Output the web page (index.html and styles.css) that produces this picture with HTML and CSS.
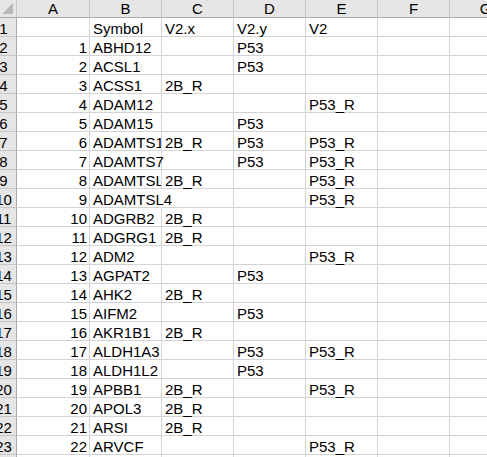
FILE: index.html
```html
<!DOCTYPE html>
<html lang="en">
<head>
    <meta charset="UTF-8">
    <title>Sheet1</title>
    <link rel="stylesheet" href="styles.css">
</head>
<body>

    <!-- Worksheet grid -->
    <table class="sheet">
        <colgroup>
            <col class="col-head">
            <col class="col-a">
            <col class="col"><col class="col"><col class="col"><col class="col"><col class="col"><col class="col">
        </colgroup>
        <thead>
            <tr>
                <th class="corner"><span class="tri"></span></th>
                <th>A</th><th>B</th><th>C</th><th>D</th><th>E</th><th>F</th><th>G</th>
            </tr>
        </thead>
        <tbody>
            <tr><th>1</th><td></td><td>Symbol</td><td>V2.x</td><td>V2.y</td><td>V2</td><td></td><td></td></tr>
            <tr><th>2</th><td class="num">1</td><td>ABHD12</td><td></td><td>P53</td><td></td><td></td><td></td></tr>
            <tr><th>3</th><td class="num">2</td><td>ACSL1</td><td></td><td>P53</td><td></td><td></td><td></td></tr>
            <tr><th>4</th><td class="num">3</td><td>ACSS1</td><td>2B_R</td><td></td><td></td><td></td><td></td></tr>
            <tr><th>5</th><td class="num">4</td><td>ADAM12</td><td></td><td></td><td>P53_R</td><td></td><td></td></tr>
            <tr><th>6</th><td class="num">5</td><td>ADAM15</td><td></td><td>P53</td><td></td><td></td><td></td></tr>
            <tr><th>7</th><td class="num">6</td><td class="clip">ADAMTS1</td><td>2B_R</td><td>P53</td><td>P53_R</td><td></td><td></td></tr>
            <tr><th>8</th><td class="num">7</td><td>ADAMTS7</td><td></td><td>P53</td><td>P53_R</td><td></td><td></td></tr>
            <tr><th>9</th><td class="num">8</td><td class="clip">ADAMTSL3</td><td>2B_R</td><td></td><td>P53_R</td><td></td><td></td></tr>
            <tr><th>10</th><td class="num">9</td><td class="spill">ADAMTSL4</td><td></td><td></td><td>P53_R</td><td></td><td></td></tr>
            <tr><th>11</th><td class="num">10</td><td>ADGRB2</td><td>2B_R</td><td></td><td></td><td></td><td></td></tr>
            <tr><th>12</th><td class="num">11</td><td>ADGRG1</td><td>2B_R</td><td></td><td></td><td></td><td></td></tr>
            <tr><th>13</th><td class="num">12</td><td>ADM2</td><td></td><td></td><td>P53_R</td><td></td><td></td></tr>
            <tr><th>14</th><td class="num">13</td><td>AGPAT2</td><td></td><td>P53</td><td></td><td></td><td></td></tr>
            <tr><th>15</th><td class="num">14</td><td>AHK2</td><td>2B_R</td><td></td><td></td><td></td><td></td></tr>
            <tr><th>16</th><td class="num">15</td><td>AIFM2</td><td></td><td>P53</td><td></td><td></td><td></td></tr>
            <tr><th>17</th><td class="num">16</td><td>AKR1B1</td><td>2B_R</td><td></td><td></td><td></td><td></td></tr>
            <tr><th>18</th><td class="num">17</td><td>ALDH1A3</td><td></td><td>P53</td><td>P53_R</td><td></td><td></td></tr>
            <tr><th>19</th><td class="num">18</td><td>ALDH1L2</td><td></td><td>P53</td><td></td><td></td><td></td></tr>
            <tr><th>20</th><td class="num">19</td><td>APBB1</td><td>2B_R</td><td></td><td>P53_R</td><td></td><td></td></tr>
            <tr><th>21</th><td class="num">20</td><td>APOL3</td><td>2B_R</td><td></td><td></td><td></td><td></td></tr>
            <tr><th>22</th><td class="num">21</td><td>ARSI</td><td>2B_R</td><td></td><td></td><td></td><td></td></tr>
            <tr><th>23</th><td class="num">22</td><td>ARVCF</td><td></td><td></td><td>P53_R</td><td></td><td></td></tr>
            <tr><th>24</th><td></td><td></td><td></td><td></td><td></td><td></td><td></td></tr>
        </tbody>
    </table>

</body>
</html>
```

FILE: styles.css
```css
/* General Styling */
body {
    margin: 0;
    overflow: hidden;
    background: #fff;
    font-family: 'Liberation Sans', Arial, sans-serif;
    font-size: 15px;
    color: #000;
}

/* Sheet grid */
.sheet {
    margin-left: -9px;
    border-collapse: separate;
    border-spacing: 0;
    table-layout: fixed;
    width: 531px;
}

.col-head { width: 26px; }
.col-a { width: 73px; }
.col { width: 72px; }

.sheet td, .sheet th {
    box-sizing: border-box;
    height: 19px;
    padding: 3px 3px 0;
    line-height: 15px;
    border-right: 1px solid #d4d4d4;
    border-bottom: 1px solid #d4d4d4;
    white-space: nowrap;
    overflow: visible;
    text-align: left;
    font-weight: normal;
}

/* Column and row headers */
.sheet thead th {
    height: 18px;
    padding: 0;
    line-height: 17px;
    text-align: center;
    background: #e6e6e6;
    border-right: 1px solid #c6c6c6;
    border-bottom: 1px solid #ababab;
}

.sheet tbody th {
    padding: 3px 0 0;
    text-align: center;
    background: #e6e6e6;
    border-right: 1px solid #ababab;
    border-bottom: 1px solid #c6c6c6;
}

.corner {
    position: relative;
}

.corner .tri {
    position: absolute;
    right: 3px;
    bottom: 3px;
    width: 0;
    height: 0;
    border-left: 11px solid transparent;
    border-bottom: 11px solid #b9b9b9;
}

/* Cell states */
.sheet td.num {
    text-align: right;
    padding-right: 2px;
}

.sheet td.clip {
    overflow: hidden;
    text-overflow: clip;
}

.sheet td.spill {
    border-right-color: transparent;
}
```
